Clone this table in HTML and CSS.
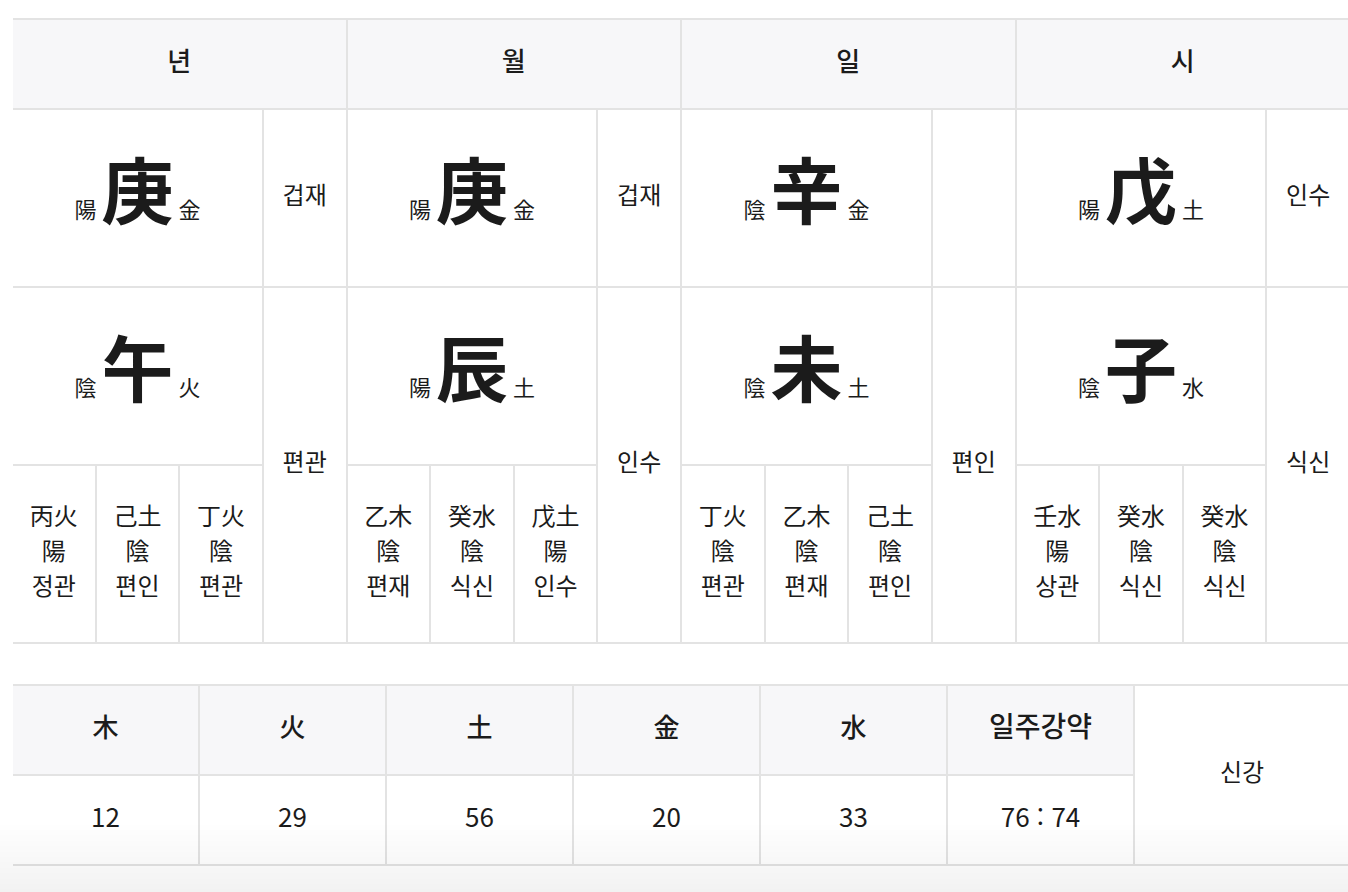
FILE: index.html
```html
<!DOCTYPE html>
<html lang="ko">
<head>
<meta charset="utf-8">
<title>사주</title>
<link rel="stylesheet" href="styles.css">
</head>
<body>
<div class="page">
  <div class="pillars">
    <div class="cell head span4">년</div>
    <div class="cell head span4">월</div>
    <div class="cell head span4">일</div>
    <div class="cell head span4">시</div>

    <div class="cell main"><span class="sm">陽</span><span class="big">庚</span><span class="sm">金</span></div>
    <div class="cell side">겁재</div>
    <div class="cell main"><span class="sm">陽</span><span class="big">庚</span><span class="sm">金</span></div>
    <div class="cell side">겁재</div>
    <div class="cell main"><span class="sm">陰</span><span class="big">辛</span><span class="sm">金</span></div>
    <div class="cell side"></div>
    <div class="cell main"><span class="sm">陽</span><span class="big">戊</span><span class="sm">土</span></div>
    <div class="cell side">인수</div>

    <div class="cell main r3"><span class="sm">陰</span><span class="big">午</span><span class="sm">火</span></div>
    <div class="cell side tall">편관</div>
    <div class="cell main r3"><span class="sm">陽</span><span class="big">辰</span><span class="sm">土</span></div>
    <div class="cell side tall">인수</div>
    <div class="cell main r3"><span class="sm">陰</span><span class="big">未</span><span class="sm">土</span></div>
    <div class="cell side tall">편인</div>
    <div class="cell main r3"><span class="sm">陰</span><span class="big">子</span><span class="sm">水</span></div>
    <div class="cell side tall">식신</div>

    <div class="cell sub">丙火<br>陽<br>정관</div>
    <div class="cell sub">己土<br>陰<br>편인</div>
    <div class="cell sub">丁火<br>陰<br>편관</div>
    <div class="cell sub">乙木<br>陰<br>편재</div>
    <div class="cell sub">癸水<br>陰<br>식신</div>
    <div class="cell sub">戊土<br>陽<br>인수</div>
    <div class="cell sub">丁火<br>陰<br>편관</div>
    <div class="cell sub">乙木<br>陰<br>편재</div>
    <div class="cell sub">己土<br>陰<br>편인</div>
    <div class="cell sub">壬水<br>陽<br>상관</div>
    <div class="cell sub">癸水<br>陰<br>식신</div>
    <div class="cell sub">癸水<br>陰<br>식신</div>
  </div>

  <div class="elements">
    <div class="cell head">木</div>
    <div class="cell head">火</div>
    <div class="cell head">土</div>
    <div class="cell head">金</div>
    <div class="cell head">水</div>
    <div class="cell head wide">일주강약</div>
    <div class="cell result">신강</div>
    <div class="cell num">12</div>
    <div class="cell num">29</div>
    <div class="cell num">56</div>
    <div class="cell num">20</div>
    <div class="cell num">33</div>
    <div class="cell num">76 : 74</div>
  </div>
</div>
<div class="fade"></div>
</body>
</html>
```
FILE: styles.css
```css
html, body {
  margin: 0;
  padding: 0;
  background: #ffffff;
}
body {
  font-family: "Noto Sans CJK KR", "Noto Sans", sans-serif;
  color: #1b1b1b;
}
.page {
  padding: 18px 0 0 13px;
}
.pillars {
  width: 1336px;
  display: grid;
  grid-template-columns: repeat(16, 1fr);
  grid-template-rows: 88px 176px 176px 176px;
  gap: 2px;
  padding: 2px 0;
  background: #e3e3e3;
}
.cell {
  background: #ffffff;
  display: flex;
  align-items: center;
  justify-content: center;
  font-size: 24px;
  text-align: center;
  padding-bottom: 10px;
  box-sizing: border-box;
}
.head {
  background: #f7f7f9;
  font-size: 26px;
  font-weight: 500;
}
.wide {
  font-size: 28px;
  font-weight: 500;
}
.span4 { grid-column: span 4; }
.main {
  grid-column: span 3;
  align-items: baseline;
  padding: 41px 0 0;
  gap: 5px;
}
.r3 { grid-row: 3; }
.tall { grid-row: 3 / span 2; }
.sm {
  font-size: 22px;
}
.big {
  font-size: 72px;
  font-weight: 700;
  line-height: 1;
}
.sub {
  line-height: 35px;
}
.elements {
  width: 1336px;
  margin-top: 40px;
  display: grid;
  grid-template-columns: repeat(6, 185px) 1fr;
  grid-template-rows: 88px 88px;
  gap: 2px;
  padding: 2px 0;
  background: #e3e3e3;
}
.result {
  grid-column: 7;
  grid-row: 1 / span 2;
}
.num {
  font-size: 26px;
}
.fade {
  position: fixed;
  left: 0;
  right: 0;
  bottom: 0;
  height: 70px;
  pointer-events: none;
  background: linear-gradient(to bottom, rgba(0,0,0,0), rgba(0,0,0,0.05));
}
```
